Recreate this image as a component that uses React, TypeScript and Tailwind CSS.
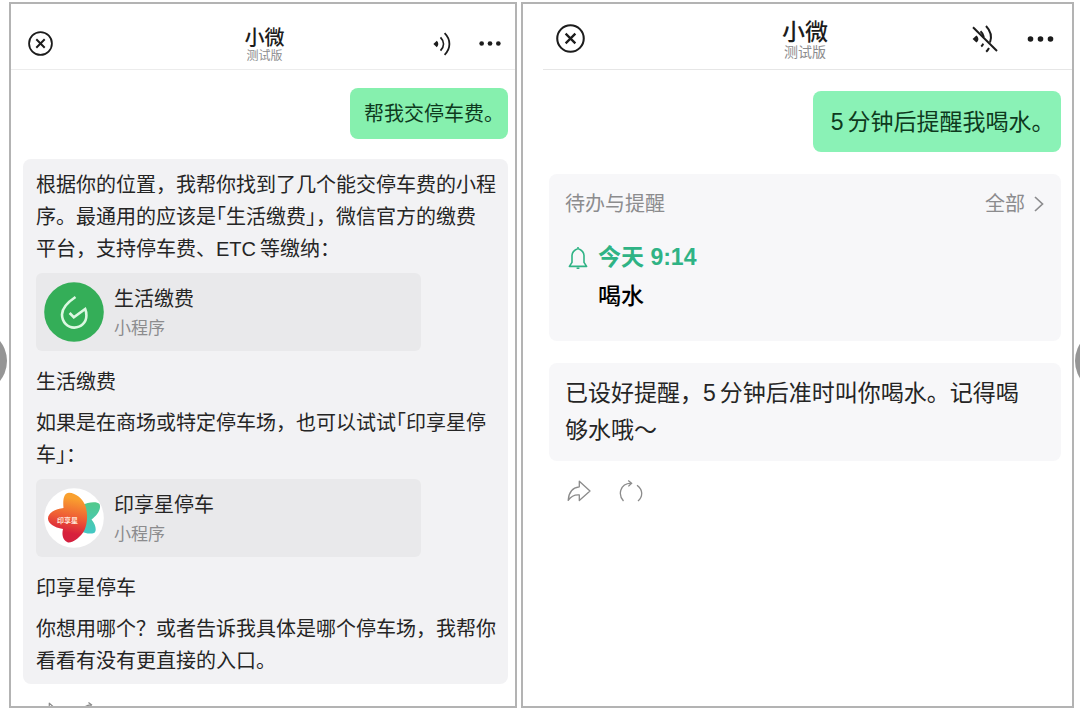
import type { ReactNode } from "react";

// Full-width punctuation set at half width
function Half({ children }: { children: ReactNode }) {
  return <span className="[font-feature-settings:'halt']">{children}</span>;
}

function CloseIcon({ className }: { className: string }) {
  return (
    <svg viewBox="0 0 28 28" fill="none" stroke="#1c1c1c" className={className}>
      <circle cx="14" cy="14" r="12.8" strokeWidth="2" />
      <path d="M9.3 9.3l9.4 9.4M18.7 9.3l-9.4 9.4" strokeWidth="2.2" />
    </svg>
  );
}

function SoundIcon() {
  return (
    <svg viewBox="0 0 18 24" fill="none" stroke="#1c1c1c" strokeWidth="1.8" className="h-6 w-[18px]">
      <path d="M0.4 12L3.8 8.8C5.8 10.8 5.8 13.2 3.8 15.2Z" fill="#1c1c1c" stroke="none" />
      <path d="M7.5 5.4C11.4 9.4 11.4 14.6 7.5 18.6" />
      <path d="M11.6 1.2C18 7.6 18 16.4 11.6 22.8" />
    </svg>
  );
}

function MutedIcon() {
  return (
    <svg viewBox="0 0 28 30" fill="none" stroke="#1c1c1c" strokeWidth="2" className="h-[30px] w-7">
      <path d="M1.6 15L5.4 11.4C8 13.6 8 16.4 5.4 18.6Z" fill="#1c1c1c" stroke="none" />
      <path d="M9.5 7.2C11.6 9 12.5 11 12.8 13M10.2 22.6C11.1 21.8 11.8 20.6 12.2 19.6" />
      <path d="M15 2C20 7.2 20.8 13.5 19 18.5M15.2 27.8C16.4 26.6 17.4 25.2 18 24" />
      <path d="M2 3.2L26 27" />
    </svg>
  );
}

function DotsIcon({ className }: { className: string }) {
  return (
    <svg viewBox="0 0 26 6" fill="#1c1c1c" className={className}>
      <circle cx="3" cy="3" r="2.8" />
      <circle cx="13" cy="3" r="2.8" />
      <circle cx="23" cy="3" r="2.8" />
    </svg>
  );
}

function ShareIcon({ className }: { className: string }) {
  return (
    <svg viewBox="0 0 24 22" fill="none" stroke="#8b8b8b" strokeWidth="1.3" strokeLinejoin="round" className={className}>
      <path d="M12.3 1.2L23 11L12.3 20.6V15C7.5 14.6 4 16.4 1.2 20.4C1.6 13 5.2 7.6 12.3 6.8Z" />
    </svg>
  );
}

function RefreshIcon({ className }: { className: string }) {
  return (
    <svg viewBox="0 0 24 22" fill="none" stroke="#8b8b8b" strokeWidth="1.3" className={className}>
      <path d="M4.5 21C-1.2 14.5 0.8 4 12 3.2M18 5.2C24.2 9.8 24 16.5 19 21" />
      <path d="M9.2 0.6L12.6 3.2L9.4 6.4" />
    </svg>
  );
}

function BellIcon() {
  return (
    <svg viewBox="0 0 20 24" fill="none" stroke="#2fb385" strokeWidth="1.6" strokeLinejoin="round" className="h-6 w-5">
      <path d="M10 1V2.6M1.4 20.4H18.6L16 16.4V9.6C16 6 14.2 4.4 10 2.6C5.8 4.4 4 6 4 9.6V16.4Z" />
      <path d="M8.6 22.2H11.4" />
    </svg>
  );
}

function PaymentLogo() {
  return (
    <svg viewBox="0 0 60 60" fill="none" className="size-[60px] shrink-0">
      <circle cx="30" cy="30" r="29.8" fill="#34ae58" />
      <path
        d="M31.5 15C24 20 18 25.2 18 32.5C18 40 23.5 45.6 30.2 45.6C37 45.6 42.4 40.5 42.4 33.5C42.4 31 42 28.8 41.2 27L29.8 35.2L25.6 31"
        stroke="#dcf8e2"
        strokeWidth="2.6"
      />
    </svg>
  );
}

function ParkingLogo() {
  return (
    <svg viewBox="0 0 60 60" className="size-[60px] shrink-0">
      <defs>
        <linearGradient id="warm" x1="0.6" y1="0" x2="0.45" y2="1">
          <stop offset="0.1" stopColor="#f9a02f" />
          <stop offset="0.5" stopColor="#ee5a35" />
          <stop offset="0.8" stopColor="#d8203c" />
          <stop offset="1" stopColor="#d3203f" />
        </linearGradient>
        <linearGradient id="cool" x1="0" y1="0" x2="0" y2="1">
          <stop offset="0" stopColor="#52c98a" />
          <stop offset="1" stopColor="#43c8c6" />
        </linearGradient>
      </defs>
      <circle cx="30" cy="30" r="29.8" fill="#fff" />
      <path
        d="M38 17C44 14 53 13 55.5 16C57.5 20 54 27 47.5 31.5C52 37 53 43 50 45C46 46.5 40 45 36 43Z"
        fill="url(#cool)"
      />
      <path
        d="M19.5 20C18.5 10 20.5 5 25 4.8C32 5 39 11 41.5 18C44 26 43.5 35 40.5 42C37 49 29 55 24 54.4C19 53 17.5 47 19 41C10 39.5 4 35.5 4 30.5C4 25 11 21 19.5 20Z"
        fill="url(#warm)"
      />
      <text x="13" y="35" fontSize="7" fontWeight="700" fill="#ffe3d5">
        印享星
      </text>
    </svg>
  );
}

function MiniProgram({ logo, name }: { logo: ReactNode; name: string }) {
  return (
    <button className="mt-2 mb-[15px] flex w-full max-w-[385px] items-center gap-[10px] rounded-md bg-[#e9e9eb] px-2 py-[9px] text-left">
      {logo}
      <span className="flex flex-col">
        <span className="leading-[34px]">{name}</span>
        <span className="text-[17px] leading-[26px] text-[#8c8c8e]">小程序</span>
      </span>
    </button>
  );
}

function ParkingChat() {
  return (
    <section className="overflow-hidden border-2 border-[#b3b3b3] text-[20px] leading-8">
      <header className="grid h-[66px] grid-cols-[1fr_auto_1fr] items-center border-b border-[#ececec] pt-[14px] pr-[14px] pl-[17px]">
        <button aria-label="关闭">
          <CloseIcon className="size-[25px]" />
        </button>
        <div className="flex flex-col items-center pt-1">
          <h1 className="text-[20px] leading-5 font-medium text-[#1c1c1c]">小微</h1>
          <p className="text-[12px] leading-4 text-[#8c8c8e]">测试版</p>
        </div>
        <div className="flex items-center justify-end gap-7">
          <button aria-label="朗读">
            <SoundIcon />
          </button>
          <button aria-label="更多">
            <DotsIcon className="h-[5px] w-[22px]" />
          </button>
        </div>
      </header>

      <div className="mr-[7px] ml-3 flex flex-col">
        <p className="mt-[18px] self-end rounded-lg bg-[#86f0ae] px-[14px] pt-[10px] pb-[9px] text-[#0e3a1e]">
          帮我交停车费<Half>。</Half>
        </p>

        <article className="mt-5 rounded-lg bg-[#f2f2f4] pt-[10px] pr-2 pb-[7px] pl-[13px]">
          <p>
            根据你的位置，我帮你找到了几个能交停车费的小程
            <br />
            序。最通用的应该是<Half>「</Half>生活缴费<Half>」</Half>，微信官方的缴费
            <br />
            平台，支持停车费、<span className="mr-1">ETC</span>等缴纳：
          </p>
          <MiniProgram logo={<PaymentLogo />} name="生活缴费" />
          <p>生活缴费</p>
          <p className="mt-[9px]">
            如果是在商场或特定停车场，也可以试试<Half>「</Half>印享星停
            <br />车<Half>」</Half>：
          </p>
          <MiniProgram logo={<ParkingLogo />} name="印享星停车" />
          <p>印享星停车</p>
          <p className="mt-[9px]">
            你想用哪个？或者告诉我具体是哪个停车场，我帮你
            <br />
            看看有没有更直接的入口。
          </p>
        </article>

        <div className="mt-[18px] ml-[15px] flex gap-5">
          <button aria-label="分享">
            <ShareIcon className="h-5 w-[22px]" />
          </button>
          <button aria-label="重新生成">
            <RefreshIcon className="h-5 w-[22px]" />
          </button>
        </div>
      </div>
    </section>
  );
}

function ReminderChat() {
  return (
    <section className="overflow-hidden border-2 border-[#b3b3b3] text-[23px] leading-[37px]">
      <header className="ml-5 grid h-[66px] grid-cols-[1fr_auto_1fr] items-center border-b border-[#e6e6e6] pt-1 pr-[18px] pl-[13px]">
        <button aria-label="关闭">
          <CloseIcon className="size-[29px]" />
        </button>
        <div className="flex flex-col items-center pt-[3px]">
          <h1 className="text-[23px] leading-6 font-medium text-[#1c1c1c]">小微</h1>
          <p className="text-[14px] leading-4 text-[#8c8c8e]">测试版</p>
        </div>
        <div className="flex items-center justify-end gap-7">
          <button aria-label="取消静音">
            <MutedIcon />
          </button>
          <button aria-label="更多">
            <DotsIcon className="h-[6px] w-[27px]" />
          </button>
        </div>
      </header>

      <div className="mr-[11px] ml-[26px] flex flex-col">
        <p className="mt-[21px] self-end rounded-lg bg-[#8af2b6] px-[18px] pt-[13px] pb-[11px] text-[#0e3a1e]">
          <span className="mr-1">5</span>分钟后提醒我喝水<Half>。</Half>
        </p>

        <article className="mt-[22px] rounded-lg bg-[#f7f7f9] px-4 pt-[15px] pb-[25px]">
          <div className="flex justify-between text-[20px] leading-[30px] text-[#8c8c8e]">
            <h2>待办与提醒</h2>
            <button className="flex items-center gap-2">
              全部
              <svg viewBox="0 0 12 18" fill="none" stroke="#8c8c8e" strokeWidth="1.7" className="h-[18px] w-3">
                <path d="M2 2L9.5 9L2 16" />
              </svg>
            </button>
          </div>
          <div className="mt-[19px] grid grid-cols-[auto_1fr] items-center gap-x-[10px] pl-[3px] leading-[39px]">
            <BellIcon />
            <time className="font-bold text-[#2fb385]">今天 9:14</time>
            <p className="col-start-2 font-medium text-black">喝水</p>
          </div>
        </article>

        <article className="mt-[22px] rounded-lg bg-[#f7f7f9] px-4 py-3">
          <p>
            已设好提醒，<span className="mr-1">5</span>分钟后准时叫你喝水。记得喝
            <br />
            够水哦～
          </p>
        </article>

        <div className="mt-[19px] ml-[18px] flex gap-7">
          <button aria-label="分享">
            <ShareIcon className="h-[22px] w-6" />
          </button>
          <button aria-label="重新生成">
            <RefreshIcon className="h-[22px] w-6" />
          </button>
        </div>
      </div>
    </section>
  );
}

export default function App() {
  return (
    <main
      lang="zh-CN"
      className="relative grid h-screen grid-cols-[508fr_553fr] gap-1 overflow-hidden bg-white pt-0.5 pr-[6px] pb-[14px] pl-[9px] font-['Liberation_Sans','Noto_Sans_CJK_SC',sans-serif] text-[#252525]"
    >
      <ParkingChat />
      <ReminderChat />

      {/* carousel arrows, mostly outside the frame */}
      <button aria-label="上一张" className="absolute top-1/2 -left-[57px] size-16 -translate-y-1/2 rounded-full bg-[#959595]" />
      <button aria-label="下一张" className="absolute top-1/2 -right-[59px] size-16 -translate-y-1/2 rounded-full bg-[#959595]" />
    </main>
  );
}
